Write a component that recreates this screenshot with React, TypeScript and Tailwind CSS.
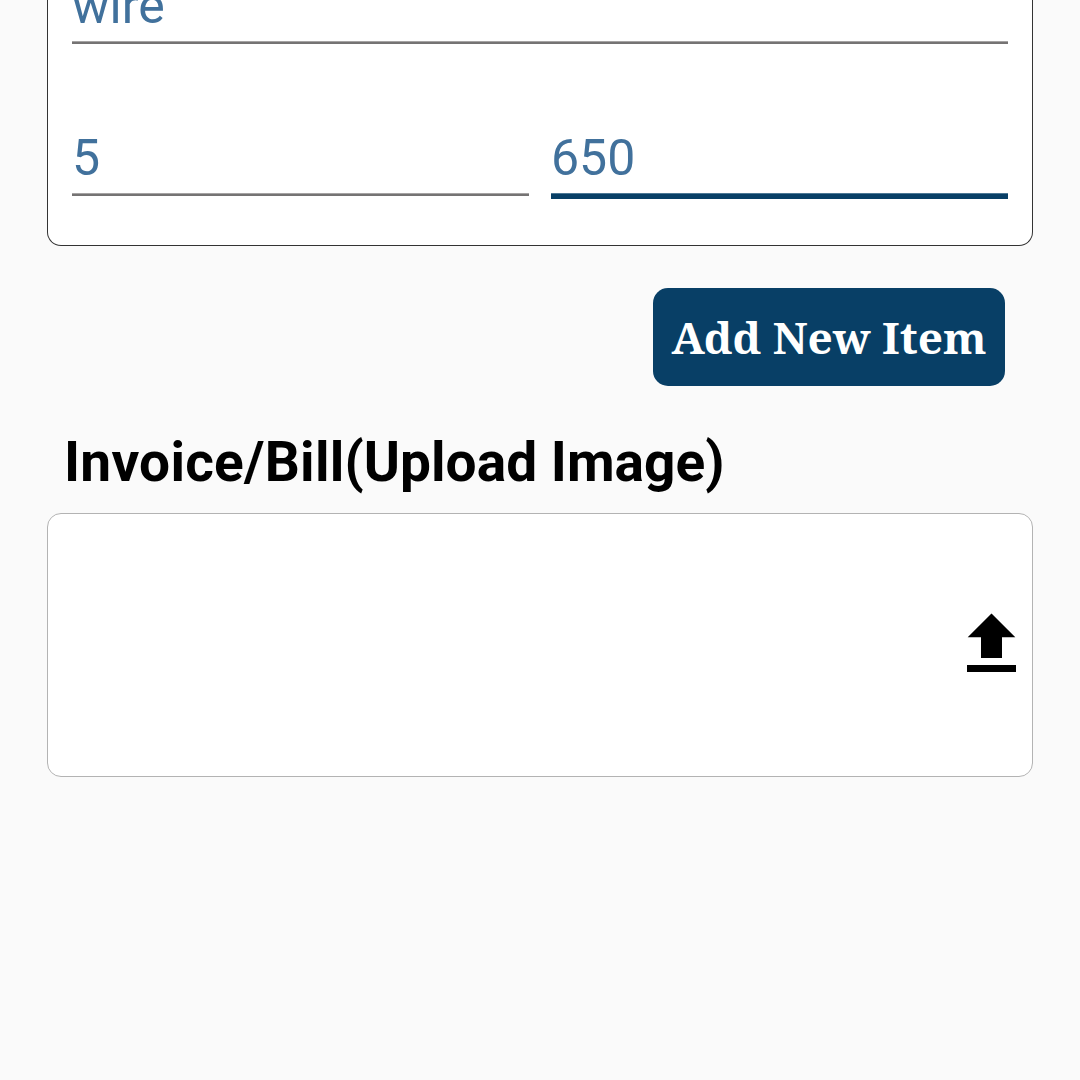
const input =
  "block h-full w-full min-w-0 border-b bg-transparent px-0 pt-[2px] pb-0 text-[50px] leading-[58px] text-[#41719c] outline-none";

function Field({ label, value, focused = false }: { label: string; value: string; focused?: boolean }) {
  return (
    <div
      className={
        focused
          ? "h-[79px] min-w-0 flex-1 border-b-[5px] border-[#083f66]"
          : "h-[76px] min-w-0 flex-1 border-b-2 border-[#757373]"
      }
    >
      <input
        aria-label={label}
        defaultValue={value}
        className={`${input} ${focused ? "border-[#4d7895]" : "border-[#a5a3a3]"}`}
      />
    </div>
  );
}

export default function App() {
  return (
    <main className="h-[1080px] w-[1080px] overflow-hidden bg-[#fafafa] px-[47px] font-['Roboto',sans-serif]">
      <section className="h-[246px] overflow-hidden rounded-b-[14px] border-x border-b border-[#333333] bg-white px-6">
        <div className="-mt-8 flex">
          <Field label="Item name" value="wire" />
        </div>
        <div className="mt-[76px] flex items-start gap-[22px]">
          <Field label="Quantity" value="5" />
          <Field label="Price" value="650" focused />
        </div>
      </section>

      <div className="mt-[42px] flex justify-end pr-[28px]">
        <button className="h-[98px] w-[352px] whitespace-nowrap rounded-[15px] bg-[#083f66] font-['Noto_Serif','Droid_Serif','Liberation_Serif',serif] text-[44.2px] font-bold text-white">
          Add New Item
        </button>
      </div>

      <h2 className="mt-[44px] h-[83px] whitespace-nowrap pl-[17px] text-[55px] leading-[64px] font-bold text-black">
        <span className="tracking-[0.25px]">Invoice/Bill</span>
        <span className="tracking-[0.03px]">(Upload Image)</span>
      </h2>

      <section className="flex h-[264px] items-center justify-end rounded-[14px] border border-[#b3b3b3] bg-white pr-[16px] pb-[5px]">
        <button aria-label="Upload image">
          <svg className="block" width="49" height="59" viewBox="0 0 49 59" fill="black">
            <path d="M24.5 0.5 48.3 24.3H35V45H14V24.3H0.7Z M0 52H49V59H0Z" />
          </svg>
        </button>
      </section>
    </main>
  );
}
